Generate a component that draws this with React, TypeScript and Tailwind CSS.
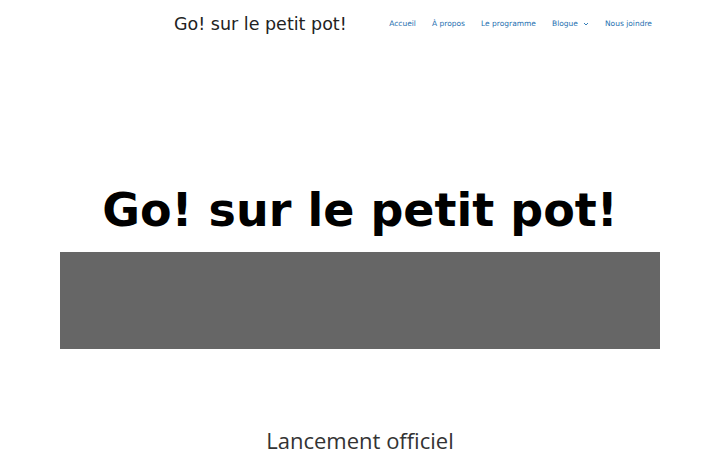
export default function App() {
  const links = ['Accueil', 'À propos', 'Le programme', 'Blogue', 'Nous joindre'];
  return (
    <div className="min-h-screen bg-white font-['DejaVu_Sans',sans-serif]">
      <header className="flex items-center justify-between h-[48px] pl-[174px] pr-[68px] whitespace-nowrap">
        <div className="text-[17.5px] text-[#222]">Go! sur le petit pot!</div>
        <nav className="flex items-center gap-[16px] text-[7.5px] text-[#1e6fb0]">
          {links.map(l => (
            <a key={l} href="#" className="flex items-center gap-[5px]">
              {l}
              {l === 'Blogue' && (
                <svg width="6" height="4" viewBox="0 0 6 4" fill="none" stroke="currentColor" strokeWidth="0.9">
                  <path d="M1 1l2 2 2-2" />
                </svg>
              )}
            </a>
          ))}
        </nav>
      </header>

      <main className="px-[60px]">
        <h1 className="text-center font-bold text-[46px] text-black leading-none pt-[139px] pb-[19px] whitespace-nowrap">
          Go! sur le petit pot!
        </h1>
        <div className="h-[97px] bg-[#666666]" />
        <h2 className="text-center text-[22px] text-[#333] pt-[75px] font-['Open_Sans',sans-serif] whitespace-nowrap">
          Lancement officiel
        </h2>
      </main>
    </div>
  );
}
